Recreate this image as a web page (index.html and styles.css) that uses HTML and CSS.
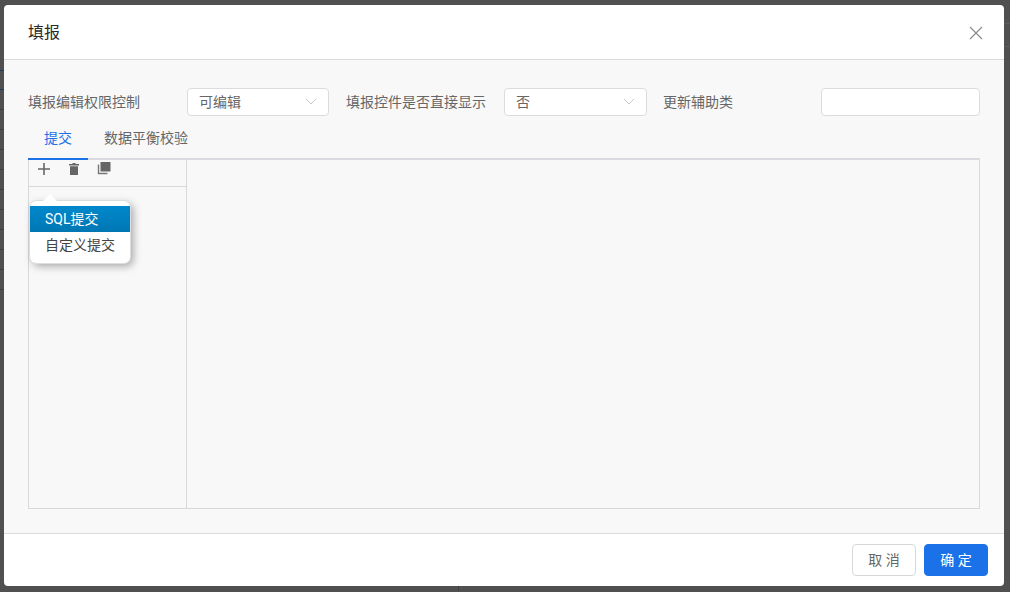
FILE: index.html
```html
<!DOCTYPE html>
<html lang="zh">
<head>
<meta charset="utf-8">
<title>填报</title>
<link rel="stylesheet" href="styles.css">
</head>
<body>
<div class="modal">
  <header class="modal-head">
    <h1 class="modal-title">填报</h1>
    <svg class="close" width="14" height="14" viewBox="0 0 14 14"><path d="M1 1l12 12M13 1L1 13" fill="none" stroke="#8c8c8c" stroke-width="1.2"/></svg>
  </header>
  <main class="modal-body">
    <div class="form-row">
      <label class="label label-a">填报编辑权限控制</label>
      <div class="select select-a"><span>可编辑</span><svg width="12" height="7" viewBox="0 0 12 7"><path d="M1 1l5 5 5-5" fill="none" stroke="#c8c8c8"/></svg></div>
      <label class="label label-b">填报控件是否直接显示</label>
      <div class="select select-b"><span>否</span><svg width="12" height="7" viewBox="0 0 12 7"><path d="M1 1l5 5 5-5" fill="none" stroke="#c8c8c8"/></svg></div>
      <label class="label label-c">更新辅助类</label>
      <div class="input"></div>
    </div>
    <div class="tabs">
      <div class="tab active">提交</div>
      <div class="tab">数据平衡校验</div>
    </div>
    <div class="panel">
      <aside class="side">
        <div class="toolbar">
          <svg width="12" height="12" viewBox="0 0 12 12"><path d="M6 0v12M0 6h12" stroke="#666" stroke-width="1.6" fill="none"/></svg>
          <svg width="10" height="12" viewBox="0 0 10 12"><path d="M3.5 0h3v1H10v1.4H0V1h3.5zM1 3.3h8V12H1z" fill="#666"/></svg>
          <svg width="14" height="13" viewBox="0 0 14 13"><path d="M3.5 0h10v9.5h-10z" fill="#666"/><path d="M1.5 2.5v9h9" fill="none" stroke="#777" stroke-width="1.4"/></svg>
        </div>
        <div class="menu">
          <div class="menu-item selected">SQL提交</div>
          <div class="menu-item">自定义提交</div>
        </div>
      </aside>
      <section class="content"></section>
    </div>
  </main>
  <footer class="modal-foot">
    <button class="btn">取 消</button>
    <button class="btn primary">确 定</button>
  </footer>
</div>
</body>
</html>
```
FILE: styles.css
```css
* { box-sizing: border-box; }
html, body { margin: 0; height: 100%; overflow: hidden; }
body {
  width: 1010px;
  height: 592px;
  padding: 5px 6px 6px 4px;
  font-family: Roboto, "Noto Sans CJK SC", sans-serif;
  font-size: 14px;
  color: #666;
  background-color: #505050;
  background-image:
    linear-gradient(#173a66, #173a66),
    linear-gradient(#173a66, #173a66),
    repeating-linear-gradient(to bottom, #3e3e3e 0 1px, transparent 1px 20px),
    linear-gradient(#5c5c5c, #5c5c5c),
    linear-gradient(#5c5c5c, #5c5c5c),
    repeating-linear-gradient(to bottom, #333 0 1px, transparent 1px 2px);
  background-repeat: no-repeat;
  background-size: 4px 1px, 4px 1px, 4px 200px, 6px 1px, 6px 1px, 1px 6px;
  background-position: 0 70px, 0 89px, 0 109px, 1004px 23px, 1004px 46px, 458px 586px;
}
.modal {
  width: 1000px;
  height: 581px;
  display: flex;
  flex-direction: column;
  background: #fff;
  border-radius: 4px;
  overflow: hidden;
}
.modal-head {
  height: 55px;
  flex: none;
  padding: 0 21px 0 24px;
  display: flex;
  align-items: center;
  justify-content: space-between;
  border-bottom: 1px solid #dcdcdc;
}
.modal-title { margin: -2px 0 0; font-size: 16px; font-weight: 400; color: #2b2b2b; }
.close { margin-top: 1px; }
.modal-body { flex: 1; min-height: 0; padding: 28px 24px 24px; background: #f8f8f8; display: flex; flex-direction: column; }
.form-row { display: flex; align-items: center; height: 28px; line-height: 24px; }
.label { flex: none; white-space: nowrap; color: #666; }
.label-a { width: 159px; }
.label-b { width: 158px; margin-left: 17px; }
.label-c { width: 158px; margin-left: 16px; }
.select, .input { height: 28px; background: #fff; border: 1px solid #dcdcdc; border-radius: 4px; flex: none; }
.select { width: 142px; padding: 0 11px 0 11px; display: flex; align-items: center; justify-content: space-between; }
.select svg { margin-top: -2px; }
.select-b { width: 143px; }
.input { width: 159px; }
.tabs { display: flex; margin-top: 8px; height: 36px; border-bottom: 2px solid #dadae0; }
.tab { height: 36px; padding: 0 16px; line-height: 28px; color: #666; }
.tab.active { color: #1b72e8; border-bottom: 2px solid #1b72e8; }
.panel { flex: 1; min-height: 0; display: flex; border: 1px solid #d8d8d8; border-top: 0; }
.side { width: 158px; flex: none; border-right: 1px solid #d8d8d8; position: relative; }
.toolbar { height: 27px; border-bottom: 1px solid #d8d8d8; display: flex; align-items: center; padding: 0 0 9px 9px; }
.toolbar svg:nth-child(2) { margin-left: 19px; }
.toolbar svg:nth-child(3) { margin-left: 18px; }
.content { flex: 1; }
.menu {
  position: absolute;
  left: 1px;
  top: 41px;
  width: 100px;
  height: 62px;
  padding: 5px 0;
  background: #fff;
  border-radius: 6px;
  box-shadow: 0 0 0 1px #ddd, 3px 3px 8px rgba(0, 0, 0, .35);
}
.menu::before {
  content: "";
  position: absolute;
  left: 13px;
  top: -7px;
  border-left: 7px solid transparent;
  border-right: 7px solid transparent;
  border-bottom: 7px solid #fff;
}
.menu-item { height: 26px; line-height: 27px; padding-left: 15px; color: #444; white-space: nowrap; }
.menu-item.selected { color: #fff; background: linear-gradient(#0088cc, #0077b3); }
.modal-foot {
  height: 53px;
  flex: none;
  border-top: 1px solid #dcdcdc;
  padding: 10px 16px 0 0;
  display: flex;
  justify-content: flex-end;
  align-items: flex-start;
  gap: 8px;
}
.btn {
  width: 64px;
  height: 32px;
  padding: 0 0 2px;
  font: inherit;
  color: #666;
  background: #fff;
  border: 1px solid #d8d8d8;
  border-radius: 4px;
}
.btn.primary { color: #fff; background: #1b72e8; border-color: #1b72e8; }
```
